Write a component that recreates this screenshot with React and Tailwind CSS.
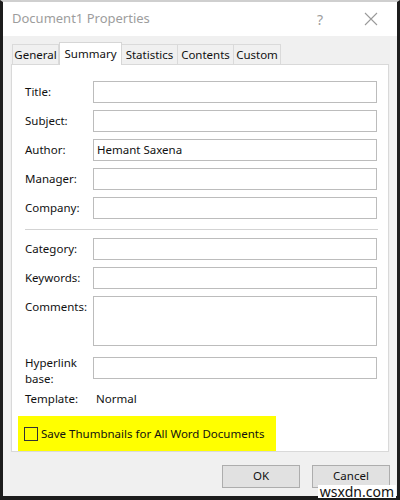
const font = { fontFamily: '"Noto Sans", "Open Sans", Arial, sans-serif' };

function Field({ label, value, tall, top = "mt-[7px]" }) {
  return (
    <div className={`flex ${top}`}>
      <div className="w-[68px] shrink-0 pt-[3px] text-[11.5px] leading-[16px] text-[#111]">{label}</div>
      <div
        className={`w-[284px] border border-[#bcbcbc] bg-white px-[3px] text-[11.5px] leading-[20px] text-[#111] ${tall ? "h-[50px]" : "h-[22px]"}`}
      >
        {value}
      </div>
    </div>
  );
}

export default function App() {
  const tabs = [
    ["General", "w-[47px] border-l"],
    ["Summary", ""],
    ["Statistics", "w-[56px]"],
    ["Contents", "w-[56px]"],
    ["Custom", "w-[47px]"],
  ];
  return (
    <div style={font} className="relative w-[400px] h-[500px] overflow-hidden bg-white">
      <div className="flex h-full flex-col border-x-[3px] border-b-[4px] border-t-[2px] border-x-[#1c1c1c] border-b-[#1c1c1c] border-t-[#cfcfcf]">
        {/* title bar */}
        <div className="flex h-[34px] shrink-0 items-center bg-white pl-[9px] pr-[19px]">
          <span className="text-[13px] text-[#9d9d9d]">Document1 Properties</span>
          <span className="ml-auto mr-[41px] text-[14px] text-[#9d9d9d]">?</span>
          <svg width="14" height="14" viewBox="0 0 14 14" className="text-[#9a9a9a]">
            <path d="M1 1 L13 13 M13 1 L1 13" stroke="currentColor" strokeWidth="1.1" fill="none" />
          </svg>
        </div>

        {/* body */}
        <div className="flex flex-1 flex-col bg-[#f0f0f0] pl-[8px] pr-[7px]">
          <div className="mt-[6px] flex h-[22px] items-end pl-[1px]">
            {tabs.map(([t, cls]) =>
              t === "Summary" ? (
                <div
                  key={t}
                  className="relative z-10 -mb-px flex h-[23px] w-[63px] items-start justify-center border border-b-0 border-[#d6d6d6] bg-white pt-[2px] text-[11.5px] text-[#111]"
                >
                  {t}
                </div>
              ) : (
                <div
                  key={t}
                  className={`flex h-[20px] items-center justify-center border-y border-r border-b-0 border-[#dadada] bg-[#f0f0f0] text-[11.5px] text-[#111] ${cls}`}
                >
                  {t}
                </div>
              )
            )}
          </div>

          {/* panel */}
          <div className="flex h-[388px] w-[378px] flex-col border border-[#d9d9d9] bg-white pl-[13px] pt-[16px]">
            <Field label="Title:" top="mt-0" />
            <Field label="Subject:" />
            <Field label="Author:" value="Hemant Saxena" />
            <Field label="Manager:" />
            <Field label="Company:" />
            <div className="mt-[10px] mb-[8px] h-px w-[353px] shrink-0 bg-[#d3d3d3]" />
            <Field label="Category:" top="mt-0" />
            <Field label="Keywords:" />
            <Field label="Comments:" tall />
            <div className="mt-[11px] flex h-[22px]">
              <div className="-mt-[2px] h-[22px] w-[68px] shrink-0 text-[11.5px] leading-[16px] text-[#111]">
                Hyperlink
                <br />
                base:
              </div>
              <div className="h-[22px] w-[284px] border border-[#bcbcbc] bg-white" />
            </div>
            <div className="mt-[12px] flex text-[11.5px] leading-[16px] text-[#111]">
              <span className="w-[71px]">Template:</span>
              <span>Normal</span>
            </div>
            <div className="-ml-[7px] mt-auto flex h-[35px] w-[258px] items-center bg-[#ffff00] pl-[6px]">
              <div className="h-[14px] w-[14px] shrink-0 border border-[#333]" />
              <span className="ml-[3px] whitespace-nowrap text-[11.5px] text-[#111]">
                Save Thumbnails for All Word Documents
              </span>
            </div>
          </div>

          {/* buttons */}
          <div className="mt-[13px] flex justify-end gap-[12px]">
            <button className="h-[23px] w-[78px] border border-[#adadad] bg-[#e1e1e1] pb-[2px] text-[11.5px] leading-[14px] text-[#111]">OK</button>
            <button className="h-[23px] w-[78px] border border-[#adadad] bg-[#e1e1e1] pb-[2px] text-[11.5px] leading-[14px] text-[#111]">Cancel</button>
          </div>
        </div>
      </div>
      <div className="absolute bottom-[2px] right-[4px] bg-white px-[2px] text-[14px] leading-[13px] text-[#111]">wsxdn.com</div>
    </div>
  );
}
